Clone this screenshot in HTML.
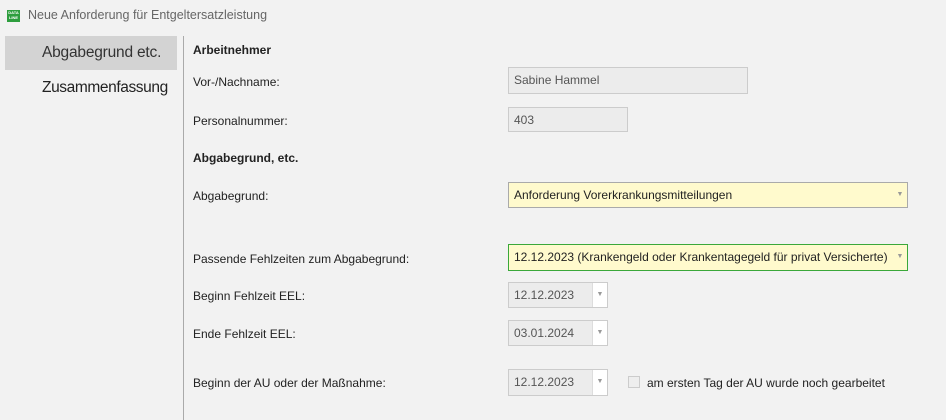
<!DOCTYPE html><html><head><style>
body{margin:0;width:946px;height:420px;background:#f2f2f2;font-family:"Liberation Sans",sans-serif;font-size:12px;color:#222;position:relative;overflow:hidden}
.a{position:absolute;white-space:nowrap}
.box{position:absolute;box-sizing:border-box;border:1px solid #ccc;background:#ececec;color:#555;padding:0 5px;line-height:25px}
.dd{position:absolute;box-sizing:border-box;border:1px solid #aaa;background:#fffacd;color:#222;padding:0 5px;line-height:25px}
.ar{position:absolute;right:0;top:0;bottom:0;width:14px;text-align:center;color:#999;font-size:7px;line-height:24px}
.dt .ar{background:#fff;border-left:1px solid #ddd}
</style></head><body>
<div class="a" style="left:7px;top:10px;width:13px;height:12px;background:#2e9e3e;color:#fff;font-size:4px;line-height:5px;text-align:center;font-weight:bold">DATA<br>LINE</div>
<div class="a" style="left:28px;top:8px;color:#666;font-size:12.5px">Neue Anforderung für Entgeltersatzleistung</div>
<div class="a" style="left:5px;top:36px;width:172px;height:34px;background:#d3d3d3"></div>
<div class="a" style="left:42px;top:44px;font-size:15.5px;color:#333;letter-spacing:-0.2px">Abgabegrund etc.</div>
<div class="a" style="left:42px;top:79px;font-size:15.5px;color:#222;letter-spacing:-0.4px">Zusammenfassung</div>
<div class="a" style="left:183px;top:36px;width:1px;height:384px;background:#aaa"></div>
<div class="a" style="left:193px;top:43px;font-weight:bold">Arbeitnehmer</div>
<div class="a" style="left:193px;top:75px">Vor-/Nachname:</div>
<div class="box" style="left:508px;top:67px;width:240px;height:27px">Sabine Hammel</div>
<div class="a" style="left:193px;top:114px">Personalnummer:</div>
<div class="box" style="left:508px;top:107px;width:120px;height:25px">403</div>
<div class="a" style="left:193px;top:151px;font-weight:bold">Abgabegrund, etc.</div>
<div class="a" style="left:193px;top:189px">Abgabegrund:</div>
<div class="dd" style="left:508px;top:182px;width:400px;height:26px">Anforderung Vorerkrankungsmitteilungen<span class="ar">▼</span></div>
<div class="a" style="left:193px;top:252px">Passende Fehlzeiten zum Abgabegrund:</div>
<div class="dd" style="left:508px;top:244px;width:400px;height:27px;border-color:#3aa83a">12.12.2023 (Krankengeld oder Krankentagegeld für privat Versicherte)<span class="ar">▼</span></div>
<div class="a" style="left:193px;top:289px">Beginn Fehlzeit EEL:</div>
<div class="box dt" style="left:508px;top:282px;width:100px;height:26px">12.12.2023<span class="ar">▼</span></div>
<div class="a" style="left:193px;top:327px">Ende Fehlzeit EEL:</div>
<div class="box dt" style="left:508px;top:320px;width:100px;height:26px">03.01.2024<span class="ar">▼</span></div>
<div class="a" style="left:193px;top:376px">Beginn der AU oder der Maßnahme:</div>
<div class="box dt" style="left:508px;top:369px;width:100px;height:27px">12.12.2023<span class="ar">▼</span></div>
<div class="a" style="left:628px;top:376px;width:12px;height:12px;border:1px solid #ccc;box-sizing:border-box;background:#eee"></div>
<div class="a" style="left:647px;top:376px">am ersten Tag der AU wurde noch gearbeitet</div>
</body></html>
